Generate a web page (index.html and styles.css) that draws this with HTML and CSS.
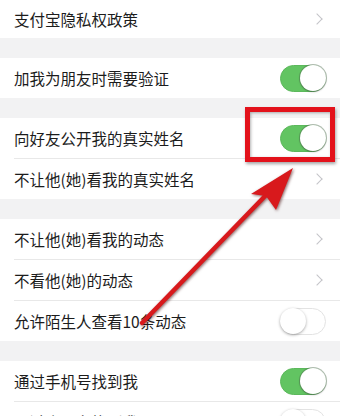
FILE: index.html
```html
<!DOCTYPE html>
<html lang="zh">
<head>
<meta charset="utf-8">
<link rel="stylesheet" href="styles.css">
</head>
<body>
<div class="page">
  <div class="group">
    <div class="row first"><span>支付宝隐私权政策</span><i class="chev"></i></div>
  </div>
  <div class="group">
    <div class="row"><span>加我为朋友时需要验证</span><i class="toggle on"></i></div>
  </div>
  <div class="group">
    <div class="row"><span>向好友公开我的真实姓名</span><i class="toggle on"></i></div>
    <div class="row"><span>不让他(她)看我的真实姓名</span><i class="chev"></i></div>
  </div>
  <div class="group">
    <div class="row"><span>不让他(她)看我的动态</span><i class="chev"></i></div>
    <div class="row"><span>不看他(她)的动态</span><i class="chev"></i></div>
    <div class="row"><span>允许陌生人查看10条动态</span><i class="toggle"></i></div>
  </div>
  <div class="group">
    <div class="row"><span>通过手机号找到我</span><i class="toggle on"></i></div>
    <div class="row"><span>通过会员名找到我</span><i class="toggle"></i></div>
  </div>

  <div class="highlight"></div>
  <svg class="arrow" width="340" height="416" viewBox="0 0 340 416">
    <g class="arrow-shape">
      <line x1="142" y1="323" x2="268" y2="193" stroke="#d8191c" stroke-width="4.5" stroke-linecap="round"/>
      <polygon points="293,168 276,210 266,196 251,194" fill="#d8191c"/>
    </g>
  </svg>
</div>
</body>
</html>
```
FILE: styles.css
```css
html, body {
  margin: 0;
  padding: 0;
}
body {
  background: #f2f2f3;
  font-family: "Noto Sans CJK SC", "Noto Sans", sans-serif;
  color: #1c1c1c;
}
.page {
  position: relative;
  width: 340px;
  height: 416px;
  overflow: hidden;
  display: flex;
  flex-direction: column;
  gap: 20px;
}
.group {
  background: #fff;
  display: flex;
  flex-direction: column;
}
.row {
  height: 40px;
  flex: none;
  display: flex;
  align-items: center;
  justify-content: space-between;
  padding: 0 14px 0 14px;
  font-size: 15.5px;
  position: relative;
}
.row.first {
  height: 38px;
}
.row + .row {
  border-top: 1px solid #e8e8e8;
  margin-left: 14px;
  padding-left: 0;
}
.chev {
  width: 7px;
  height: 7px;
  border-right: 1.5px solid #c4c4c8;
  border-top: 1.5px solid #c4c4c8;
  transform: rotate(45deg);
  margin-right: 5px;
}
.toggle {
  width: 46px;
  height: 27px;
  border-radius: 14px;
  box-sizing: border-box;
  border: 1.5px solid #e3e3e3;
  background: #fff;
  position: relative;
}
.toggle::after {
  content: "";
  position: absolute;
  top: -1px;
  left: -1px;
  width: 26px;
  height: 26px;
  border-radius: 50%;
  background: #fff;
  box-shadow: 0 1px 3px rgba(0,0,0,0.35);
}
.toggle.on {
  background: #62c462;
  border-color: #5cb85c;
}
.toggle.on::after {
  left: auto;
  right: -1px;
  box-shadow: 0 0 0 1px rgba(80,110,80,0.45), 0 1px 2px rgba(0,0,0,0.25);
}
.highlight {
  position: absolute;
  left: 245px;
  top: 107px;
  width: 90px;
  height: 55px;
  box-sizing: border-box;
  border: 5px solid #e3121b;
  box-shadow: 1px 2px 3px rgba(0,0,0,0.35), inset 1px 1px 3px rgba(0,0,0,0.3);
}
.arrow {
  position: absolute;
  left: 0;
  top: 0;
  pointer-events: none;
}
.arrow-shape {
  filter: drop-shadow(1px 1px 1.5px rgba(60,0,0,0.6));
}
```
